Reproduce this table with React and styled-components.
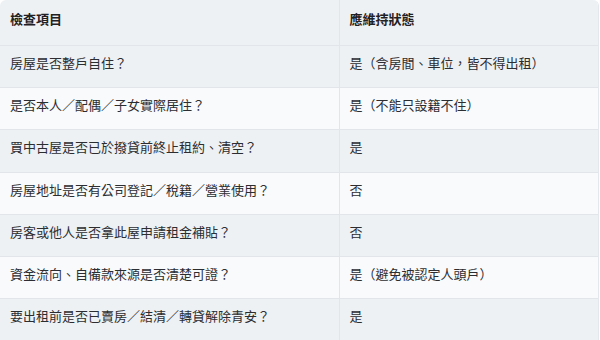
import React from "react";
import styled, { createGlobalStyle } from "styled-components";

const rows = [
  ["房屋是否整戶自住？", "是（含房間、車位，皆不得出租）"],
  ["是否本人／配偶／子女實際居住？", "是（不能只設籍不住）"],
  ["買中古屋是否已於撥貸前終止租約、清空？", "是"],
  ["房屋地址是否有公司登記／稅籍／營業使用？", "否"],
  ["房客或他人是否拿此屋申請租金補貼？", "否"],
  ["資金流向、自備款來源是否清楚可證？", "是（避免被認定人頭戶）"],
  ["要出租前是否已賣房／結清／轉貸解除青安？", "是"],
];

function App() {
  return (
    <Page>
      <GlobalStyle />
      <Table.Wrapper>
        <Table.Grid>
          <thead>
            <tr>
              <Table.Head>檢查項目</Table.Head>
              <Table.Head>應維持狀態</Table.Head>
            </tr>
          </thead>
          <tbody>
            {rows.map(([item, state], i) => (
              <Table.Row key={item} $even={i % 2 === 1}>
                <Table.Cell>{item}</Table.Cell>
                <Table.Cell>{state}</Table.Cell>
              </Table.Row>
            ))}
          </tbody>
        </Table.Grid>
      </Table.Wrapper>
    </Page>
  );
}

const Page = styled.main`
  width: 600px;
  height: 340px;
  overflow: hidden;
  background: #ffffff;
`;

const Table = {
  Wrapper: styled.div`
    width: 599px;
    border-right: 1px solid #e4e7eb;
    border-top-right-radius: 6px;
    border-top-left-radius: 6px;
    overflow: hidden;
  `,
  Grid: styled.table`
    width: 100%;
    border-collapse: collapse;
    table-layout: fixed;
    font-size: 13px;
    line-height: 20px;
    color: #2b2d31;
  `,
  Head: styled.th`
    text-align: left;
    font-weight: 700;
    color: #1f2124;
    background: #eef1f4;
    padding: 9px 10px 16px;
    border-bottom: 1px solid #e2e5e9;

    &:first-child {
      width: 339px;
      border-right: 1px solid #e2e5e9;
    }
  `,
  Row: styled.tr`
    background: ${(p) => (p.$even ? "#f8fafc" : "#eef1f4")};
  `,
  Cell: styled.td`
    padding: 7px 10px 14px;
    line-height: 20.2px;
    border-bottom: 1px solid #e2e5e9;
    vertical-align: top;

    &:first-child {
      border-right: 1px solid #e2e5e9;
    }
  `,
};

const GlobalStyle = createGlobalStyle`
  *,
  *::before,
  *::after {
    margin: 0;
    padding: 0;
    box-sizing: border-box;
  }

  body {
    background: #ffffff;
    font-family: "Noto Sans", "Noto Sans CJK TC", sans-serif;
  }
`;

export default App;
